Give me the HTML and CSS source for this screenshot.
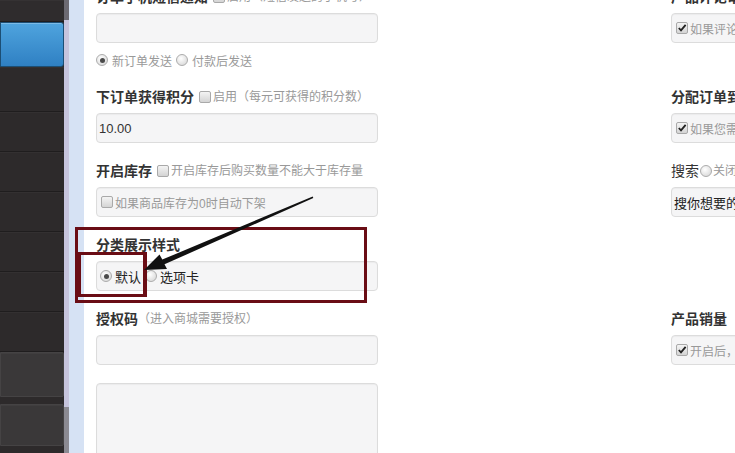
FILE: index.html
```html
<!DOCTYPE html>
<html>
<head>
    <meta charset="UTF-8">
    <title>商城设置</title>
    <link rel="stylesheet" href="styles.css">
</head>
<body>
    <div class="page">
        <aside class="sidebar">
            <div class="nav-item top"></div>
            <div class="nav-item active"></div>
            <div class="nav-item tall"></div>
            <div class="nav-item"></div>
            <div class="nav-item"></div>
            <div class="nav-item"></div>
            <div class="nav-item"></div>
            <div class="nav-item"></div>
            <div class="nav-item"></div>
            <div class="nav-item light"></div>
            <div class="nav-item light second"></div>
        </aside>
        <div class="scrollbar"></div>
        <div class="rail"></div>

        <main class="content">
            <div class="form-row first">
                <div class="group">
                    <div class="label"><b>订单手机短信通知</b><span class="cb"></span><span class="hint">启用（短信发送的手机号）</span></div>
                    <div class="field"></div>
                    <div class="options">
                        <span class="rd on"></span><span class="opt">新订单发送</span>
                        <span class="rd"></span><span class="opt">付款后发送</span>
                    </div>
                </div>
                <div class="group">
                    <div class="label"><b>产品评论审核</b></div>
                    <div class="field"><span class="cb on"><svg viewBox="0 0 11 11"><path d="M2 5.5l2.4 2.6L9.5 2" /></svg></span><span class="hint">如果评论需要审核后才显示</span></div>
                </div>
            </div>

            <div class="form-row">
                <div class="group">
                    <div class="label"><b>下订单获得积分</b><span class="cb"></span><span class="hint">启用（每元可获得的积分数）</span></div>
                    <div class="field value">10.00</div>
                </div>
                <div class="group">
                    <div class="label"><b>分配订单到门店</b></div>
                    <div class="field"><span class="cb on"><svg viewBox="0 0 11 11"><path d="M2 5.5l2.4 2.6L9.5 2" /></svg></span><span class="hint">如果您需要分配订单到门店</span></div>
                </div>
            </div>

            <div class="form-row">
                <div class="group">
                    <div class="label"><b>开启库存</b><span class="cb"></span><span class="hint">开启库存后购买数量不能大于库存量</span></div>
                    <div class="field"><span class="cb"></span><span class="hint">如果商品库存为0时自动下架</span></div>
                </div>
                <div class="group">
                    <div class="label"><span class="plain">搜索</span><span class="rd"></span><span class="hint">关闭</span></div>
                    <div class="field value dark">搜你想要的商品</div>
                </div>
            </div>

            <div class="form-row">
                <div class="group">
                    <div class="label"><b>分类展示样式</b></div>
                    <div class="field">
                        <span class="rd on"></span><span class="opt dark">默认</span>
                        <span class="rd"></span><span class="opt dark">选项卡</span>
                    </div>
                </div>
                <div class="group"></div>
            </div>

            <div class="form-row">
                <div class="group">
                    <div class="label"><b>授权码</b><span class="hint">（进入商城需要授权）</span></div>
                    <div class="field"></div>
                </div>
                <div class="group">
                    <div class="label"><b>产品销量</b></div>
                    <div class="field"><span class="cb on"><svg viewBox="0 0 11 11"><path d="M2 5.5l2.4 2.6L9.5 2" /></svg></span><span class="hint">开启后，显示产品销量</span></div>
                </div>
            </div>

            <div class="form-row">
                <div class="group">
                    <div class="field area"></div>
                </div>
            </div>
        </main>

        <!-- annotation drawn over the screenshot -->
        <div class="mark big"></div>
        <div class="mark small"></div>
        <svg class="arrow" width="735" height="453" viewBox="0 0 735 453">
            <polygon points="144,270 167,269 164.5,264.3 313.3,198 312.7,196.4 162.3,259.6 159.5,254.5" />
        </svg>
    </div>
</body>
</html>
```

FILE: styles.css
```css
:root {
    --text: #333333;
    --hint: #999999;
    --field-bg: #f5f5f6;
    --field-border: #dcdcdc;
    --mark: #6a0d15;
}

html, body {
    margin: 0;
    height: 453px;
    overflow: hidden;
    background: #ffffff;
}

.page {
    position: relative;
    display: flex;
    height: 453px;
    font-family: 'Liberation Sans', 'Noto Sans CJK SC', sans-serif;
    color: var(--text);
}

.sidebar {
    width: 64px;
    flex-shrink: 0;
    background: #2d2a2b;
    display: flex;
    flex-direction: column;
}

.nav-item {
    box-sizing: border-box;
    height: 40px;
    border-bottom: 1px solid #1f1d1e;
    box-shadow: inset 0 1px 0 rgba(255, 255, 255, 0.03);
}

.nav-item.top {
    height: 22px;
    background: #2f2c2d;
}

.nav-item.tall {
    height: 45px;
}

.nav-item.active {
    height: 45px;
    background: linear-gradient(#4fa4de, #2f80c3);
    border: 1px solid #1c4e74;
    border-radius: 0 3px 3px 0;
    box-shadow: inset 0 1px 0 rgba(255, 255, 255, 0.25);
}

.nav-item.light {
    height: 45px;
    background: #3a3839;
    border: 1px solid #454344;
    border-radius: 0 2px 2px 0;
}

.nav-item.second {
    height: 42px;
    margin-top: 7px;
}

.scrollbar {
    width: 5px;
    flex-shrink: 0;
    background: linear-gradient(#6c6a72 0, #6c6a72 20px, #c6c4dd 20px, #c6c4dd 407px, #8b8a92 407px);
}

.rail {
    width: 15px;
    flex-shrink: 0;
    background: #d6e2f4;
}

.content {
    flex: 1;
    padding-left: 12px;
    margin-top: -13px;
    overflow: hidden;
}

.form-row {
    display: grid;
    grid-template-columns: 282px 282px;
    column-gap: 293px;
    margin-bottom: 18px;
}

.form-row.first {
    margin-bottom: 17px;
}

.label {
    height: 20px;
    line-height: 20px;
    margin-bottom: 6px;
    white-space: nowrap;
    display: flex;
    align-items: center;
}

.label b {
    font-size: 14px;
    font-weight: bold;
}

.label .plain {
    font-size: 14px;
}

.hint {
    font-size: 12px;
    color: var(--hint);
    white-space: nowrap;
}

.field {
    box-sizing: border-box;
    height: 30px;
    background: var(--field-bg);
    border: 1px solid var(--field-border);
    border-radius: 4px;
    box-shadow: inset 0 1px 1px rgba(0, 0, 0, 0.04);
    display: flex;
    align-items: center;
    padding-left: 3px;
    white-space: nowrap;
    overflow: hidden;
}

.field.value {
    font-size: 13px;
    padding-left: 2px;
}

.field.dark {
    color: #222222;
}

.field.area {
    height: 110px;
}

.options {
    margin-top: 7px;
    height: 20px;
    display: flex;
    align-items: center;
}

.opt {
    font-size: 12px;
    color: var(--hint);
    margin: 0 4px 0 4px;
}

.opt.dark {
    font-size: 13px;
    color: #222222;
    margin: 0 4px 0 3px;
}

.cb {
    box-sizing: border-box;
    display: inline-block;
    width: 12px;
    height: 12px;
    margin: 0 2px 0 5px;
    border: 1px solid #a9a9a9;
    border-radius: 2px;
    background: linear-gradient(#f4f4f4, #d4d4d4);
    flex-shrink: 0;
}

.field .cb {
    margin-left: 1px;
}

.cb svg {
    display: block;
    width: 10px;
    height: 10px;
    fill: none;
    stroke: #222222;
    stroke-width: 2;
}

.rd {
    box-sizing: border-box;
    position: relative;
    display: inline-block;
    width: 12px;
    height: 12px;
    border-radius: 50%;
    border: 1px solid #acacac;
    background: radial-gradient(circle at 40% 35%, #ffffff, #d2d2d2);
    flex-shrink: 0;
}

.label .rd {
    margin-left: 1px;
    margin-right: 1px;
}

.rd.on::after {
    content: '';
    position: absolute;
    left: 2.5px;
    top: 2.5px;
    width: 5px;
    height: 5px;
    border-radius: 50%;
    background: #4a4a4a;
}

.mark {
    position: absolute;
    box-sizing: border-box;
    border: 3px solid var(--mark);
}

.mark.big {
    left: 75px;
    top: 227px;
    width: 292px;
    height: 76px;
}

.mark.small {
    left: 77px;
    top: 252px;
    width: 70px;
    height: 45px;
    border-width: 3px 4px;
}

.arrow {
    position: absolute;
    left: 0;
    top: 0;
    pointer-events: none;
}

.arrow polygon {
    fill: #111111;
}
```
